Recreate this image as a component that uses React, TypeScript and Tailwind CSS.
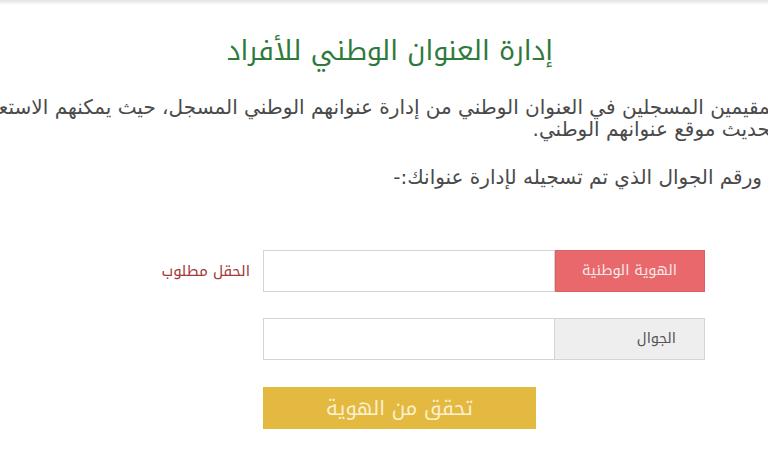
import React from "react";

const body = { fontFamily: '"DejaVu Sans", Tahoma, sans-serif' };
const kufi = { fontFamily: '"Noto Kufi Arabic", "Noto Sans Arabic", "DejaVu Sans", sans-serif' };

export default function App() {
  return (
    <div className="w-[768px] h-[468px] overflow-hidden bg-white relative">
      <div className="h-[5px] bg-gradient-to-b from-[#e2e2e2] to-white" />
      <h1
        dir="rtl"
        className="mt-[28px] text-center pl-[12px] text-[27px] leading-[36px] text-[#2e7a3c] font-normal"
        style={kufi}
      >
        إدارة العنوان الوطني للأفراد
      </h1>
      <div dir="rtl" className="mt-[27px] mr-[-24px] text-[20px] text-[#4a4a4a] leading-[22px] tracking-[-0.15px]" style={body}>
        <div className="whitespace-nowrap">والمقيمين المسجلين في العنوان الوطني من إدارة عنوانهم الوطني المسجل، حيث يمكنهم الاستعلام عن</div>
        <div className="whitespace-nowrap">و تحديث موقع عنوانهم الوطني.</div>
        <div className="whitespace-nowrap mt-[26px] pr-[30px]">ورقم الجوال الذي تم تسجيله لإدارة عنوانك:-</div>
      </div>
      <div className="mt-[62px] flex flex-col items-end pr-[63px]" dir="ltr">
        <div className="flex items-center">
          <span dir="rtl" className="text-[15px] text-[#a33a3a] mr-[13px] whitespace-nowrap" style={kufi}>الحقل مطلوب</span>
          <div className="flex h-[42px] w-[442px]">
            <div className="flex-1 border border-[#d4d4d4] bg-white" />
            <div dir="rtl" className="w-[150px] bg-[#e8686c] border border-[#de5e62] flex items-center pr-[27px] whitespace-nowrap text-[14.5px] text-[#fbe9e9]" style={kufi}>
              الهوية الوطنية
            </div>
          </div>
        </div>
        <div className="flex h-[42px] w-[442px] mt-[26px]">
          <div className="flex-1 border border-[#d4d4d4] bg-white" />
          <div dir="rtl" className="w-[150px] bg-[#eeeeee] border border-l-0 border-[#d4d4d4] flex items-center pr-[28px] whitespace-nowrap text-[14.5px] text-[#555]" style={kufi}>
            الجوال
          </div>
        </div>
        <div className="w-[442px] mt-[27px] flex">
          <button dir="rtl" className="w-[273px] h-[42px] bg-[#e3b93f] text-[#fbf0d0] text-[20px]" style={kufi}>
            تحقق من الهوية
          </button>
        </div>
      </div>
    </div>
  );
}
